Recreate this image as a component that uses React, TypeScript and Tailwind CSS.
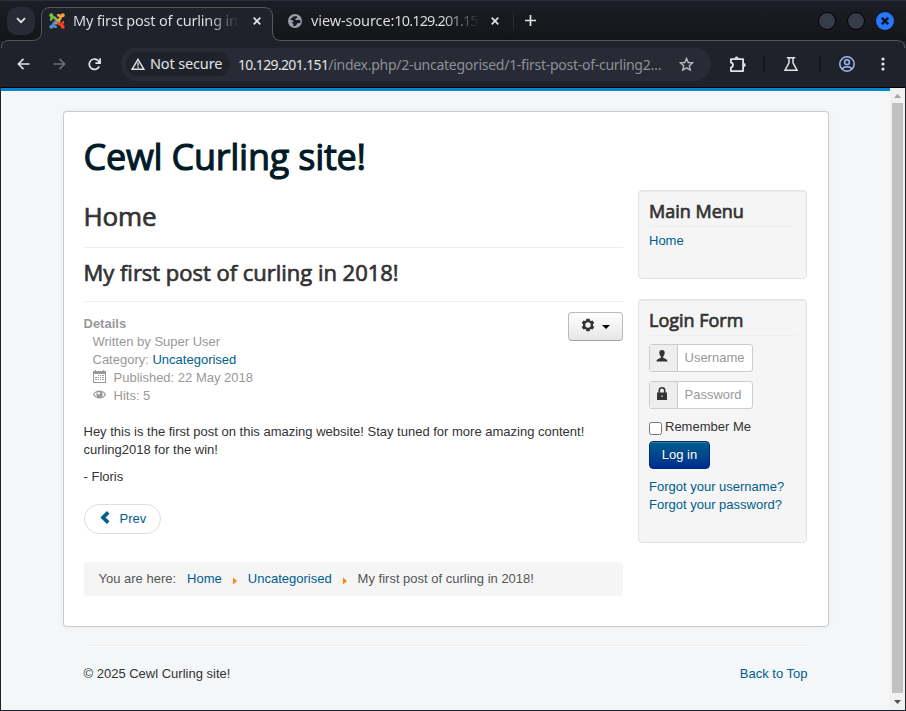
import React from "react";

const heading = "font-['Open_Sans',sans-serif] font-normal whitespace-nowrap";

function JoomlaLogo() {
  return (
    <svg width="16" height="16" viewBox="0 0 16 16" fill="none" strokeWidth="2.6">
      <path d="M2.3 7.6C1.6 5.2 3.6 3.4 5.7 4.8L11 10" stroke="#7ac143" />
      <path d="M8.2 2.5C10.3 1.7 12.7 3.4 11.2 5.7L6 11" stroke="#f9a541" />
      <path d="M13.7 8.2C14.5 10.6 12.6 12.7 10.2 11.2L8.2 9.2" stroke="#f44321" />
      <path d="M7.8 13.5C5.6 14.4 3.3 12.7 4.8 10.3L7.4 7.7" stroke="#5091cd" />
      <circle cx="2.3" cy="2.3" r="2" fill="#7ac143" />
      <circle cx="13.7" cy="2.3" r="2" fill="#f9a541" />
      <circle cx="13.7" cy="13.7" r="2" fill="#f44321" />
      <circle cx="2.3" cy="13.7" r="2" fill="#5091cd" />
    </svg>
  );
}

function Cross({ className = "" }: { className?: string }) {
  return (
    <svg className={className} width="8" height="8" viewBox="0 0 8 8" stroke="#e3e3e6" strokeWidth="1.7">
      <path d="M.7.7l6.6 6.6M7.3.7L.7 7.3" />
    </svg>
  );
}

function TabStrip() {
  return (
    <div className="relative h-[41px] bg-linear-to-b from-[#1b1e26] to-[#141518]">
      <svg className="absolute left-0 top-0" width="906" height="48" viewBox="0 0 906 48">
        <path d="M0 0.5H906" stroke="#2b2f3b" />
        <path
          d="M1.5 48V47Q1.5 40.5 9 40.5H32Q41.5 40.5 41.5 32V16Q41.5 7.5 50 7.5H264Q272.5 7.5 272.5 16V32Q272.5 40.5 281 40.5H896Q904.5 40.5 904.5 47V48"
          fill="#20222b"
          stroke="#55575d"
        />
      </svg>
      <div className="relative flex h-[41px] items-center text-[14.5px] text-[#e3e3e6] font-['Noto_Sans',sans-serif]">
        <div className="ml-[7px] flex h-7 w-7 items-center justify-center rounded-[10px] bg-[#282a35]">
          <svg width="10" height="7" viewBox="0 0 10 7" fill="none" stroke="#e3e3e6" strokeWidth="1.8">
            <path d="M1 1.2l4 4 4-4" />
          </svg>
        </div>
        <div className="ml-[14px] w-4">
          <JoomlaLogo />
        </div>
        <div className="ml-2 w-[166px] overflow-hidden whitespace-nowrap bg-linear-to-r from-[#e3e3e6] from-82% to-transparent bg-clip-text text-transparent tracking-[-0.19px]">
          My first post of curling in 2018!
        </div>
        <Cross className="ml-[14px]" />
        <svg className="ml-[27px]" width="14" height="14" viewBox="0 0 14 14">
          <circle cx="7" cy="7" r="7" fill="#9aa0a9" />
          <path d="M2 5.5L5.5 2.5 8.5 2l.8 1.7L7 5l1.2 1.2 2.6-.4 2 1.2-.7 2-2.8.2L8 11.8l-2.8.5.2-2.3-2-1.6L5.8 8 4.5 6.3z" fill="#191b21" />
        </svg>
        <div className="ml-[9px] w-[168px] overflow-hidden whitespace-nowrap bg-linear-to-r from-[#e3e3e6] from-78% to-transparent bg-clip-text text-transparent">
          <span className="tracking-[-0.1px]">view-source:</span>
          <span className="tracking-[-0.85px]">10.129.201.151</span>
        </div>
        <Cross className="ml-[12px]" />
        <div className="ml-[14px] h-4 w-px bg-[#2c2e37]" />
        <svg className="ml-[11px]" width="11" height="11" viewBox="0 0 11 11" stroke="#e3e3e6" strokeWidth="1.7">
          <path d="M5.5 0v11M0 5.5h11" />
        </svg>
        <div className="ml-auto mr-[12px] flex gap-[11px]">
          <div className="h-[18px] w-[18px] rounded-full border border-black bg-[#373c4a]" />
          <div className="h-[18px] w-[18px] rounded-full border border-black bg-[#373c4a]" />
          <div className="flex h-[18px] w-[18px] items-center justify-center rounded-full bg-[#2777ff]">
            <svg width="8" height="8" viewBox="0 0 8 8" stroke="#0c1424" strokeWidth="2.4">
              <path d="M.8.8l6.4 6.4M7.2.8L.8 7.2" />
            </svg>
          </div>
        </div>
      </div>
    </div>
  );
}

function Toolbar() {
  return (
    <div className="mx-px flex h-[46px] items-center bg-[#20222b] font-['Noto_Sans',sans-serif] text-[14.5px] text-[#e3e3e6]">
      <svg className="ml-4" width="13" height="12" viewBox="0 0 13 12" fill="none" stroke="#e3e3e6" strokeWidth="1.6">
        <path d="M12.5 6H1.4M6.5.9L1.4 6l5.1 5.1" />
      </svg>
      <svg className="ml-[23px]" width="13" height="12" viewBox="0 0 13 12" fill="none" stroke="#6b6d74" strokeWidth="1.6">
        <path d="M.5 6h11.1M6.5.9L11.6 6l-5.1 5.1" />
      </svg>
      <svg className="ml-[22px]" width="13" height="13" viewBox="0 0 13 13" fill="none" stroke="#e3e3e6" strokeWidth="1.7">
        <path d="M11.2 8.3A5.2 5.2 0 1 1 10.8 3.4L12 5M12.1.3v4.9H7.4" />
      </svg>
      <div className="ml-5 flex h-[34px] w-[590px] items-center rounded-full bg-[#282a35]">
        <div className="ml-[5px] flex h-6 w-[104px] items-center rounded-full bg-[#20222b]">
          <svg className="ml-[5px]" width="14" height="12" viewBox="0 0 14 12" fill="none" stroke="#e3e3e6" strokeWidth="1.4">
            <path d="M7 1.3L12.8 11.2H1.2ZM7 4.5v3.2M7 8.6v1.3" />
          </svg>
          <span className="ml-[5px] whitespace-nowrap tracking-[-0.15px]">Not secure</span>
        </div>
        <div className="ml-2 w-[426px] whitespace-nowrap text-[14px] text-[#8e9097]">
          <span className="tracking-[-0.65px] text-[#e3e3e6]">10.129.201.151</span>
          <span className="tracking-[-0.27px]">/index.php/2-uncategorised/1-first-post-of-curling2…</span>
        </div>
        <svg className="ml-[15px]" width="15" height="15" viewBox="0 0 15 15" fill="none" stroke="#b9bac0" strokeWidth="1.4">
          <path d="M7.5 1.5l1.75 4 4.35.4-3.3 2.9 1 4.3-3.8-2.3-3.8 2.3 1-4.3-3.3-2.9 4.35-.4z" />
        </svg>
      </div>
      <svg className="ml-[18px]" width="18" height="17" viewBox="0 0 18 17" fill="none" stroke="#e3e3e6" strokeWidth="1.8">
        <path d="M1.9 3.1H14.1V15.1H1.9V11.6A2.6 2.6 0 0 0 1.9 6.5Z" strokeLinejoin="round" />
        <path d="M5.6 2.5a2 2 0 0 1 4 0zM14.7 7a2 2 0 0 1 0 4z" fill="#e3e3e6" stroke="none" />
      </svg>
      <div className="ml-[16px] h-4 w-[2px] bg-[#14161b]" />
      <svg className="ml-[19px]" width="14" height="14" viewBox="0 0 14 14" fill="none" stroke="#e3e3e6" strokeWidth="1.5">
        <path d="M2.8.8h8.4M5 .8v5L1 13.2h12L9 5.8v-5" />
      </svg>
      <div className="ml-[21px] h-4 w-[2px] bg-[#14161b]" />
      <svg className="ml-[18px]" width="16" height="16" viewBox="0 0 16 16" fill="none" stroke="#9db8f2" strokeWidth="1.5">
        <circle cx="8" cy="8" r="7.2" />
        <circle cx="8" cy="6.2" r="2.4" />
        <path d="M2.8 13C5.5 10 10.5 10 13.2 13" />
      </svg>
      <svg className="ml-[26px]" width="4" height="14" viewBox="0 0 4 14" fill="#e3e3e6">
        <circle cx="2" cy="2" r="1.6" />
        <circle cx="2" cy="7" r="1.6" />
        <circle cx="2" cy="12" r="1.6" />
      </svg>
    </div>
  );
}

function Link({ children, className = "" }: { children: React.ReactNode; className?: string }) {
  return (
    <a href="#" className={`text-[#005e8d] ${className}`}>
      {children}
    </a>
  );
}

function Crumb() {
  return (
    <svg className="mt-[3px]" width="4" height="8" viewBox="0 0 4 8" fill="#ff8800">
      <path d="M0 0.5l4 3.5-4 3.5z" />
    </svg>
  );
}

function Article() {
  return (
    <main className="flex w-[539.5px] flex-col">
      <h2 className={`${heading} mt-[6px] h-10 text-[26px] leading-10 tracking-[-0.1px] [-webkit-text-stroke:0.7px_#333]`}>Home</h2>
      <div className="mt-[11px] h-px bg-[#eee]" />
      <h2 className={`${heading} mt-[4px] h-10 text-[22px] leading-10 tracking-[-0.02px] [-webkit-text-stroke:0.7px_#333]`}>
        My first post of curling in 2018!
      </h2>
      <div className="mt-[9px] h-px bg-[#eee]" />
      <div className="mt-[10px] flex h-[92px] justify-between text-[#999]">
        <div className="mt-[3px]">
          <div className="font-bold">Details</div>
          <div className="pl-[9px]">
            <div>Written by Super User</div>
            <div>
              Category: <Link>Uncategorised</Link>
            </div>
            <div className="flex">
              <svg className="mt-px" width="13" height="13" viewBox="0 0 13 13" fill="#999">
                <path d="M0 1h2V0h1v1h7V0h1v1h2v12H0zM1 4v8h11V4z" fillRule="evenodd" />
                <path d="M5 5h1v1H5zM7 5h1v1H7zM9 5h2v1H9zM2 7h2v1H2zM5 7h1v1H5zM7 7h1v1H7zM9 7h2v1H9zM2 9h2v1H2zM5 9h1v1H5zM7 9h1v1H7zM9 9h2v1H9z" />
              </svg>
              <span className="ml-2">Published: 22 May 2018</span>
            </div>
            <div className="flex">
              <svg className="mt-[3px]" width="13" height="9" viewBox="0 0 13 9">
                <path d="M0 4.5C2.5-.8 10.5-.8 13 4.5 10.5 9.8 2.5 9.8 0 4.5z" fill="#999" />
                <path d="M1.4 4.5Q2.2 2.8 3.7 2 2.7 4.6 4.2 7 2.4 6.3 1.4 4.5zM11.6 4.5Q10.8 2.8 9.3 2 10.3 4.6 8.8 7 10.6 6.3 11.6 4.5z" fill="#fff" />
                <circle cx="5.8" cy="3.3" r="1.2" fill="#fff" />
              </svg>
              <span className="ml-2">Hits: 5</span>
            </div>
          </div>
        </div>
        <button className="flex h-[29px] w-[55px] items-center rounded-[4px] border border-[#bbb] border-b-[#a2a2a2] bg-linear-to-b from-white to-[#e6e6e6]">
          <svg className="mb-[3px] ml-3" width="14" height="14" viewBox="0 0 14 14" fill="#333">
            <path
              fillRule="evenodd"
              d="M5.4 0.8h3.2l.4 1.7 1 .5 1.7-.6 1.5 2.6-1.2 1.2v1.5l1.2 1.2-1.5 2.7-1.700-.6-1 .5-.4 1.700H5.400L5 11.500l-1-.5-1.700.6L.8 8.900 2 7.700V6.200L.8 5l1.500-2.600L4 3l1-.5zM7 4.300a2.700 2.700 0 1 0 0 5.400 2.700 2.700 0 0 0 0-5.400z"
            />
          </svg>
          <svg className="ml-[7px]" width="8" height="4" viewBox="0 0 8 4">
            <path d="M0 0h8L4 4z" />
          </svg>
        </button>
      </div>
      <p className="mt-[19px] whitespace-nowrap">
        Hey this is the first post on this amazing website! Stay tuned for more amazing content!
        <br />
        curling2018 for the win!
      </p>
      <p className="mt-[9px]">- Floris</p>
      <a className="mt-[18px] ml-[0.5px] flex h-[30px] w-[77px] items-center rounded-full border border-[#ddd] text-[#005e8d]">
        <svg className="mb-[3px] ml-[15px]" width="10" height="13" viewBox="0 0 10 13" fill="none" stroke="#005e8d" strokeWidth="3.6">
          <path d="M8.2 1.4L3 6.5l5.200 5.100" />
        </svg>
        <span className="ml-[9.5px]">Prev</span>
      </a>
      <div className="mt-[28px] flex h-[34px] items-center rounded-[4px] bg-[#f5f5f5] pl-[15px] text-[#555]">
        <span>You are here:</span>
        <Link className="ml-[11px] mr-[11px]">Home</Link>
        <Crumb />
        <Link className="ml-[11px] mr-[11px]">Uncategorised</Link>
        <Crumb />
        <span className="ml-[11px]">My first post of curling in 2018!</span>
      </div>
    </main>
  );
}

function Well({ title, className, children }: { title: string; className: string; children: React.ReactNode }) {
  return (
    <section className={`rounded-[4px] border border-[#e3e3e3] bg-[#f5f5f5] px-[10px] shadow-[inset_0_1px_1px_rgba(0,0,0,0.05)] ${className}`}>
      <h3 className={`${heading} h-9 border-b border-[#eee] pt-[2px] text-[18px] leading-9 [-webkit-text-stroke:0.7px_#333]`}>{title}</h3>
      {children}
    </section>
  );
}

function Field({ label, className, children }: { label: string; className: string; children: React.ReactNode }) {
  return (
    <div className={`flex h-7 w-[104px] rounded-[3px] border border-[#ccc] bg-white ${className}`}>
      <div className="flex w-[28px] shrink-0 justify-center border-r border-[#ccc] bg-[#eee] pr-[3px] pt-[5px]">{children}</div>
      <input className="w-full min-w-0 bg-transparent pb-px pl-[6.5px] placeholder:text-[#999] placeholder:opacity-100" placeholder={label} />
    </div>
  );
}

function Sidebar() {
  return (
    <aside className="w-[169px]">
      <Well title="Main Menu" className="h-[89px]">
        <Link className="mt-[5px] block">Home</Link>
      </Well>
      <Well title="Login Form" className="mt-5 h-[244px]">
        <Field label="Username" className="mt-2">
          <svg width="12" height="12" viewBox="0 0 12 12" fill="#333">
            <path d="M6 0C4 0 3.2 1.2 3.3 3c.1 1.6.8 2.7 1.5 3.4v1.5C2.5 8.6.6 9.3.3 11.500h11.400C11.400 9.300 9.500 8.600 7.200 7.900V6.400C7.900 5.700 8.600 4.600 8.700 3 8.800 1.200 8 0 6 0z" />
          </svg>
        </Field>
        <Field label="Password" className="mt-[9px]">
          <svg width="10" height="13" viewBox="0 0 10 13">
            <path d="M2.3 6V3.500a2.700 2.700 0 0 1 5.400 0V6" fill="none" stroke="#333" strokeWidth="1.6" />
            <path d="M0 5.500h10V13H0z" fill="#333" />
            <path d="M4.200 8.500h1.600v1.500H4.200z" fill="#bbb" />
          </svg>
        </Field>
        <label className="mt-[9px] flex h-[18px]">
          <span className="mt-1 h-[13px] w-[13px] rounded-[2.5px] border border-[#767676] bg-white" />
          <span className="ml-[3px]">Remember Me</span>
        </label>
        <button className="mt-[5px] flex h-7 w-[61px] items-center justify-center rounded-[4px] border border-[#002a80] bg-linear-to-b from-[#005e8d] to-[#002a8d] text-white shadow-[inset_0_1px_0_rgba(255,255,255,0.2)] [text-shadow:0_-1px_0_rgba(0,0,0,0.25)]">
          Log in
        </button>
        <Link className="mt-[9px] block">Forgot your username?</Link>
        <Link className="block">Forgot your password?</Link>
      </Well>
    </aside>
  );
}

export default function App() {
  return (
    <div className="flex h-[711px] w-[906px] flex-col overflow-hidden bg-[#20222b]">
      <TabStrip />
      <Toolbar />
      <div className="mx-px flex h-[623px] border-t border-black bg-[#f4f6f7] font-['Liberation_Sans',Arial,sans-serif] text-[13px] leading-[18px] text-[#333]">
        <div className="w-[889px] border-t-[3px] border-[#0088cc] bg-[#f4f6f8]">
          <div className="ml-[62px] mt-5 h-[516px] w-[766px] rounded-[4px] border border-black/15 bg-white bg-clip-padding pl-[19.5px] shadow-[0_0_6px_rgba(0,0,0,0.05)]">
            <h1 className={`${heading} mt-[20px] h-[50px] text-[36px] leading-[50px] tracking-[-0.24px] text-[#001a27] [-webkit-text-stroke:1.1px_#001a27]`}>
              Cewl Curling site!
            </h1>
            <div className="mt-[8px] flex gap-[15px]">
              <Article />
              <Sidebar />
            </div>
          </div>
          <footer className="ml-[82.5px] mt-[18px] w-[724px] border-t border-[#eee]">
            <div className="flex justify-between border-t border-white pt-[18px]">
              <span>© 2025 Cewl Curling site!</span>
              <Link>Back to Top</Link>
            </div>
          </footer>
        </div>
        <div className="flex w-[15px] flex-col items-center bg-[#f1f1f1]">
          <svg width="15" height="15" viewBox="0 0 15 15" fill="#a3a3a3">
            <path d="M4 10h7L7.5 6z" />
          </svg>
          <div className="h-[590px] w-[11px] bg-[#c1c1c1]" />
          <svg width="15" height="17" viewBox="0 0 15 17" fill="#505050">
            <path d="M4 7h7L7.5 11z" />
          </svg>
        </div>
      </div>
    </div>
  );
}
